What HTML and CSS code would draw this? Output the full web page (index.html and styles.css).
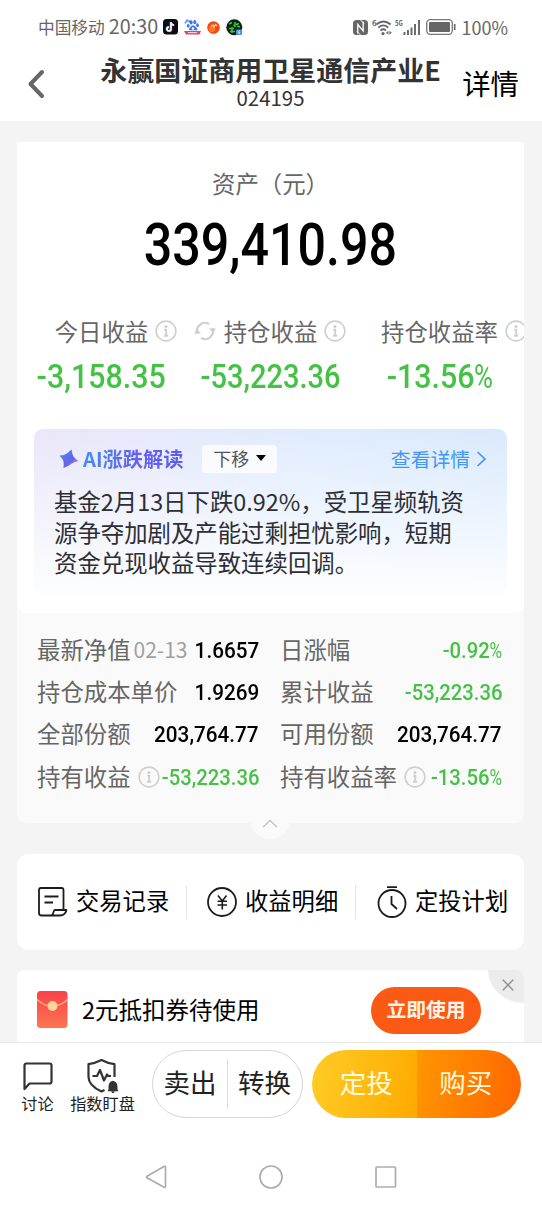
FILE: index.html
```html
<!DOCTYPE html>
<html lang="zh-CN">
<head>
    <meta charset="UTF-8">
    <meta name="viewport" content="width=device-width, initial-scale=1.0">
    <title>永赢国证商用卫星通信产业E</title>
    <link rel="stylesheet" href="styles.css">
</head>
<body>
    <!-- shared icons -->
    <svg class="defs">
        <symbol id="info" viewBox="0 0 22 22">
            <circle cx="11" cy="11" r="9.9" fill="none" stroke="#d0d0d0" stroke-width="1.6"/>
            <circle cx="11" cy="6.6" r="1.5" fill="#cfcfcf"/>
            <path d="M9.2 9.8H11.200V15.8M9 15.8H13.200" fill="none" stroke="#cfcfcf" stroke-width="1.900"/>
        </symbol>
    </svg>

    <div class="status-bar">
        <span class="carrier">中国移动</span>
        <span class="time">20:30</span>
        <div class="app-icons">
            <svg width="15" height="16" viewBox="0 0 15 16">
                <rect width="15" height="15.5" rx="3.5" fill="#0c0c14"/>
                <path d="M8 3.2V10a2 2 0 1 1-2-2M8 3.4c.3 1.7 1.4 2.6 3 2.7" fill="none" stroke="#2ee6e6" stroke-width="1.6" transform="translate(-.5 -.3)"/>
                <path d="M8 3.2V10a2 2 0 1 1-2-2M8 3.4c.3 1.7 1.4 2.6 3 2.7" fill="none" stroke="#f33a63" stroke-width="1.5" transform="translate(.5 .4)"/>
                <path d="M8 3.2V10a2 2 0 1 1-2-2M8 3.4c.3 1.7 1.4 2.6 3 2.7" fill="none" stroke="#fff" stroke-width="1.5"/>
            </svg>
            <svg width="17" height="17" viewBox="0 0 17 17">
                <path d="M1 4.5L3 1l2 2 1-2" fill="none" stroke="#6a9cf5" stroke-width="1.6"/>
                <ellipse cx="7.2" cy="3.4" rx="1.5" ry="2.1" fill="#3b74ef"/>
                <ellipse cx="10.8" cy="3.2" rx="1.5" ry="2.1" fill="#3b74ef"/>
                <ellipse cx="4.2" cy="6.8" rx="1.4" ry="1.9" fill="#3b74ef"/>
                <ellipse cx="13.5" cy="6.2" rx="1.4" ry="1.9" fill="#3b74ef"/>
                <path d="M9 6.2c2 0 4.6 3.6 4.6 5H4.8c0-1.4 2.4-5 4.2-5z" fill="#3b74ef"/>
                <circle cx="9" cy="9.5" r="1.2" fill="#fff"/>
                <path d="M0 12h17l-1.500 3.500H2z" fill="#e8415a"/>
                <path d="M4 13.600h9" stroke="#fbd5da" stroke-width="1.1"/>
            </svg>
            <svg width="13" height="13" viewBox="0 0 13 13">
                <circle cx="6.5" cy="6.5" r="6.3" fill="#f04a1c"/>
                <circle cx="5" cy="8" r="3.3" fill="#ff8a2b" opacity=".7"/>
                <path d="M4 5l2-1 1 2 1.5-2.500L10 5" fill="none" stroke="#ffe2a0" stroke-width="1.1"/>
            </svg>
            <svg width="17" height="17" viewBox="0 0 17 17">
                <circle cx="8.3" cy="8.3" r="8" fill="#0b2410"/>
                <path d="M3 5l3-1.500M7.500 6.500l5.500-2M9 3v5M3 9.500h5M4 12.500h5M6 8v6M11 7l3 1" fill="none" stroke="#35c83c" stroke-width="1.5"/>
                <rect x="10" y="10.5" width="6" height="5.5" rx="1" fill="#4b8fe8"/>
                <path d="M13.800 11.300l-1.500 2h1.500l-1 2" fill="none" stroke="#fff" stroke-width=".8"/>
            </svg>
        </div>
        <div class="system-icons">
            <svg width="15" height="15" viewBox="0 0 15 15">
                <rect width="15" height="15" rx="3.5" fill="#666"/>
                <path d="M4.800 13.500V4.500L10.200 11V1.500" fill="none" stroke="#fff" stroke-width="1.3"/>
                <path d="M7.500 0L11 3.500M4 11.500L7.500 15" fill="none" stroke="#fff" stroke-width="1"/>
            </svg>
            <svg class="wifi" width="20" height="17" viewBox="0 0 20 17">
                <text x="0" y="7" class="tiny">6</text>
                <path d="M4.300 5.500Q11.500-.5 18.700 5.500M6.300 8.600q5-4.400 10 0M8.500 11.500q2.800-2.400 5.400 0" fill="none" stroke="#666" stroke-width="1.800"/>
                <circle cx="11" cy="14.600" r="1.600" fill="#666"/>
                <path d="M16.400 11.700l-2.400 2 2.400 2zM17.400 11.700l2.400 2-2.400 2z" fill="#666"/>
            </svg>
            <svg class="signal" width="26" height="17" viewBox="0 0 26 17">
                <text x="0" y="7" class="tiny" textLength="8" lengthAdjust="spacingAndGlyphs">5G</text>
                <path d="M9.500 16v-3M13 16v-5M16.500 16V8.500M20 16V5M24 16V1" fill="none" stroke="#666" stroke-width="1.9"/>
            </svg>
            <svg class="battery" width="30" height="16" viewBox="0 0 30 16">
                <rect x=".7" y=".7" width="25.6" height="14.6" rx="3.5" fill="none" stroke="#777" stroke-width="1.3"/>
                <rect x="3" y="3" width="21" height="10" rx="1" fill="#666"/>
                <path d="M28.700 5v6" stroke="#666" stroke-width="1.6"/>
            </svg>
            <span class="percent">100%</span>
        </div>
    </div>

    <header>
        <svg class="back" width="18" height="30" viewBox="0 0 18 30">
            <path d="M15 3L3.500 15 15 27" fill="none" stroke="#666" stroke-width="4" stroke-linecap="round" stroke-linejoin="round"/>
        </svg>
        <div class="title">
            <h1>永赢国证商用卫星通信产业E</h1>
            <p>024195</p>
        </div>
        <a class="detail-link">详情</a>
    </header>

    <main>
        <section class="asset-card">
            <div class="asset-main">
                <p class="asset-label">资产（元）</p>
                <p class="asset-total"><span class="num">339,410.98</span></p>
                <div class="stats">
                    <div class="stat">
                        <p class="stat-label">今日收益<svg class="info"><use href="#info"/></svg></p>
                        <p class="stat-value"><span class="num">-3,158.35</span></p>
                    </div>
                    <div class="stat">
                        <p class="stat-label">
                            <svg class="refresh" viewBox="0 0 22 22">
                                <path d="M3.600 14A8 8 0 0 1 15 4M18.400 8A8 8 0 0 1 7 18" fill="none" stroke="#cfcfcf" stroke-width="2.2"/>
                                <path d="M0 13.500l3-4.500 4 4.500zM22 8.500l-3 4.500-4-4.500z" fill="#cfcfcf"/>
                            </svg>持仓收益<svg class="info"><use href="#info"/></svg>
                        </p>
                        <p class="stat-value long"><span class="num">-53,223.36</span></p>
                    </div>
                    <div class="stat">
                        <p class="stat-label">持仓收益率<svg class="info"><use href="#info"/></svg></p>
                        <p class="stat-value"><span class="num">-13.56<i>%</i></span></p>
                    </div>
                </div>

                <div class="ai-box">
                    <div class="ai-head">
                        <svg class="star" width="20" height="20" viewBox="0 0 20 20">
                            <defs>
                                <linearGradient id="starFill" x1="0" y1="0" x2="1" y2="1">
                                    <stop offset="0" stop-color="#3f8cf5"/>
                                    <stop offset=".6" stop-color="#6a63e6"/>
                                    <stop offset="1" stop-color="#c59af0"/>
                                </linearGradient>
                            </defs>
                            <path d="M12.500.500q.8 5 2 7T19.500 12q-4 .5-6.500 2.500T4.500 19q.5-4 0-6.500T.5 6.500q4 0 6.500-1.500T12.500.500z" fill="url(#starFill)"/>
                        </svg>
                        <h2>AI涨跌解读</h2>
                        <button class="move">下移<span class="caret"></span></button>
                        <a class="more">查看详情
                            <svg width="11" height="18" viewBox="0 0 11 18"><path d="M1.500 2L9 9l-7.500 7" fill="none" stroke="#4496f2" stroke-width="1.7"/></svg>
                        </a>
                    </div>
                    <p class="ai-text">基金2月13日下跌0.92%，受卫星频轨资<br>源争夺加剧及产能过剩担忧影响，短期<br>资金兑现收益导致连续回调。</p>
                </div>
            </div>

            <div class="details">
                <div class="row"><span>最新净值</span><small>02-13</small><b class="num">1.6657</b></div>
                <div class="row"><span>日涨幅</span><b class="num down">-0.92<i>%</i></b></div>
                <div class="row"><span>持仓成本单价</span><b class="num">1.9269</b></div>
                <div class="row"><span>累计收益</span><b class="num down">-53,223.36</b></div>
                <div class="row"><span>全部份额</span><b class="num">203,764.77</b></div>
                <div class="row"><span>可用份额</span><b class="num">203,764.77</b></div>
                <div class="row"><span>持有收益</span><svg class="info"><use href="#info"/></svg><b class="num down">-53,223.36</b></div>
                <div class="row"><span>持有收益率</span><svg class="info"><use href="#info"/></svg><b class="num down">-13.56<i>%</i></b></div>
            </div>
            <div class="collapse">
                <svg width="16" height="9" viewBox="0 0 16 9"><path d="M1 8l7-6.500L15 8" fill="none" stroke="#c4c4c4" stroke-width="1.4"/></svg>
            </div>
        </section>

        <section class="actions">
            <a>
                <svg width="31" height="30" viewBox="0 0 31 30">
                    <path d="M26.500 22.500V3q0-2-2-2H4Q2 1 2 3v23q0 2.500 2.500 2.500H23q5 0 6.500-5.500H18q-1.200.2-1.700 2.700T14 28.500" fill="none" stroke="#1c1c1c" stroke-width="1.8" stroke-linejoin="round"/>
                    <path d="M7.500 9.500H21.500M7.500 15.500H16" stroke="#1c1c1c" stroke-width="1.8"/>
                </svg>
                <span>交易记录</span>
            </a>
            <a>
                <svg width="30" height="30" viewBox="0 0 30 30">
                    <circle cx="15" cy="15" r="14" fill="none" stroke="#1c1c1c" stroke-width="1.8"/>
                    <path d="M11 8.500l4.300 5.500 4.200-5.500M15.300 14v8.500M10.500 14.300h9.500M10.500 18h9.500" fill="none" stroke="#1c1c1c" stroke-width="1.6"/>
                </svg>
                <span>收益明细</span>
            </a>
            <a>
                <svg width="30" height="34" viewBox="0 0 30 34">
                    <circle cx="15" cy="18.500" r="13.500" fill="none" stroke="#1c1c1c" stroke-width="1.8"/>
                    <path d="M10 2.200h10M14.500 11v8l5.500 5" fill="none" stroke="#1c1c1c" stroke-width="1.8"/>
                </svg>
                <span>定投计划</span>
            </a>
        </section>

        <section class="coupon">
            <svg width="31" height="38" viewBox="0 0 31 38">
                <defs>
                    <linearGradient id="packet" x1="0" y1="0" x2="0" y2="1">
                        <stop offset="0" stop-color="#f9424a"/>
                        <stop offset="1" stop-color="#ff7552"/>
                    </linearGradient>
                </defs>
                <rect width="30.5" height="37" rx="3.5" fill="url(#packet)"/>
                <path d="M0 8.500Q7 15 15.500 15T30.500 8.500" fill="none" stroke="#ffad83" stroke-width="1.5"/>
                <circle cx="15.5" cy="15" r="5" fill="#fbd598"/>
            </svg>
            <span>2元抵扣券待使用</span>
            <button>立即使用</button>
            <div class="close">
                <svg width="12" height="12" viewBox="0 0 12 12"><path d="M.8.8l10.400 10.400M11.200.8L.8 11.200" stroke="#909090" stroke-width="1.5"/></svg>
            </div>
        </section>
    </main>

    <footer>
        <div class="tool-bar">
            <a class="tool chat">
                <svg width="34" height="36" viewBox="0 0 34 36">
                    <path d="M5 5.500H28.500q2 0 2 2V23.500q0 2-2 2H8.500L3.500 31V7.500q0-2 2-2z" fill="none" stroke="#333" stroke-width="2.2" stroke-linejoin="round"/>
                </svg>
                讨论
            </a>
            <a class="tool watch">
                <svg width="34" height="36" viewBox="0 0 34 36">
                    <path d="M28.500 19V6.200Q22 5.500 15.500 2 8.500 5.500 2.500 6.200V19q0 8.500 13 14.500l3-1.500" fill="none" stroke="#333" stroke-width="2.2" stroke-linejoin="round"/>
                    <path d="M6.500 18H11l3-6 4 10.500 3-6 1.200 1.500H25" fill="none" stroke="#333" stroke-width="2.2" stroke-linejoin="round"/>
                    <path d="M26.800 22.800q4.700 1 4.700 6v2.700l1 1.700H21.500l1-1.700v-2.700q0-5 4.300-6zM25.300 33.500h3.400l-.7 1.500h-2z" fill="#333"/>
                </svg>
                指数盯盘
            </a>
            <div class="sell-group">
                <button>卖出</button>
                <button>转换</button>
            </div>
            <div class="buy-group">
                <button class="plan">定投</button>
                <button class="buy">购买</button>
            </div>
        </div>
        <div class="nav-bar">
            <svg width="24" height="26" viewBox="0 0 24 26"><path d="M20 2.500Q21.500 1.700 21.500 3V22.500Q21.500 24 20 23.200L3 13.800Q2 13 3 12.200z" fill="none" stroke="#adadad" stroke-width="1.7"/></svg>
            <svg width="24" height="26" viewBox="0 0 24 26"><circle cx="12" cy="13" r="11" fill="none" stroke="#adadad" stroke-width="1.7"/></svg>
            <svg width="24" height="26" viewBox="0 0 24 26"><rect x="2" y="3" width="19.5" height="20" rx=".8" fill="none" stroke="#adadad" stroke-width="1.7"/></svg>
        </div>
    </footer>
</body>
</html>
```
FILE: styles.css
```css
* {
    box-sizing: border-box;
}

body {
    font-family: "Noto Sans CJK SC", sans-serif;
    margin: 0;
    height: 1206px;
    display: flex;
    flex-direction: column;
    overflow: hidden;
    background-color: #fff;
    color: #333;
}

h1, h2, p {
    margin: 0;
}

svg {
    display: block;
    flex: none;
}

button {
    font-family: inherit;
    border: none;
    padding: 0;
    cursor: pointer;
}

.defs {
    width: 0;
    height: 0;
    position: absolute;
}

/* narrow figures */
.num {
    font-family: Roboto, "Noto Sans CJK SC", sans-serif;
    font-weight: 500;
    display: inline-block;
    transform: scaleX(0.92);
}

.num i {
    font-style: normal;
    font-weight: 400;
    display: inline-block;
    transform: scaleX(0.85);
    transform-origin: left;
    margin-right: -0.11em;
}

.down {
    color: #45c245;
}

.info {
    width: 22px;
    height: 22px;
}

/* status bar */
.status-bar {
    height: 54px;
    flex: none;
    display: flex;
    align-items: center;
    padding: 0 34px 0 38px;
    color: #666;
}

.carrier {
    font-size: 16.7px;
    line-height: 24px;
    margin-top: -1px;
}

.time {
    font-size: 19.8px;
    line-height: 24px;
    margin-top: -2px;
    margin-left: 4px;
    width: 54px;
    white-space: nowrap;
}

.app-icons {
    display: flex;
    align-items: center;
    gap: 6px;
}

.system-icons {
    display: flex;
    align-items: center;
    margin-left: auto;
}

.tiny {
    font: bold 8px "Noto Sans CJK SC", sans-serif;
    fill: #666;
}

.wifi,
.signal {
    overflow: visible;
}

.wifi {
    margin-left: 4px;
}

.signal {
    margin-left: 3px;
}

.battery {
    margin-left: 5px;
}

.percent {
    font-size: 18px;
    line-height: 24px;
    margin-top: -1px;
    margin-left: 5px;
}

/* header */
header {
    height: 67px;
    flex: none;
    display: flex;
    padding-left: 27px;
    padding-right: 23px;
}

.back {
    margin-top: 15px;
}

.title {
    display: flex;
    flex-direction: column;
    align-items: center;
    margin-left: 55px;
    width: 341px;
}

.title h1 {
    font-size: 27px;
    line-height: 32px;
    white-space: nowrap;
}

.title p {
    font-size: 20.4px;
    line-height: 22px;
}

.detail-link {
    font-size: 28.4px;
    line-height: 58px;
    margin-left: auto;
    color: #000;
}

/* content */
main {
    flex: 1;
    min-height: 0;
    overflow: hidden;
    background-color: #f4f4f4;
    padding: 21px 18px 0 17px;
}

.asset-card {
    background-color: #fafafa;
    border-radius: 3px 3px 9px 9px;
    height: 681px;
    position: relative;
}

.asset-main {
    background-color: #fff;
    border-radius: 3px 3px 9px 9px;
    height: 471px;
    overflow: hidden;
    padding-top: 25px;
}

.asset-label {
    font-size: 23.4px;
    line-height: 32px;
    text-align: center;
    color: #666;
}

.asset-total {
    font-size: 58.4px;
    line-height: 64px;
    margin-top: 9px;
    text-align: center;
    color: #000;
}

.asset-total .num {
    transform: scaleX(0.86);
}

.stats {
    display: flex;
    margin-top: 39px;
}

.stat {
    width: 169px;
    display: flex;
    flex-direction: column;
    align-items: center;
}

.stat-label {
    display: flex;
    align-items: center;
    font-size: 23.4px;
    line-height: 30px;
    color: #666;
    white-space: nowrap;
}

.stat-label .info {
    margin-left: 7px;
    margin-right: -29px;
}

.refresh {
    width: 22px;
    height: 22px;
    margin-left: -30px;
    margin-right: 8px;
}

.stat-value {
    font-size: 33px;
    line-height: 40px;
    margin-top: 8px;
    color: #45c245;
    white-space: nowrap;
}

.stat-value.long .num {
    transform: scaleX(0.88);
}

/* AI box */
.ai-box {
    margin: 32px 17px 0;
    height: 165px;
    border-radius: 9px;
    background: linear-gradient(to bottom, rgba(252, 253, 255, 0), #fcfdff 98%), linear-gradient(to right, #eae6f9, #dfecfe 60%, #d9e9fd);
}

.ai-head {
    display: flex;
    align-items: center;
    height: 60px;
    padding: 0 20px 0 25px;
}

.ai-head h2 {
    font-size: 20.2px;
    line-height: 28px;
    margin-left: 4px;
    background: linear-gradient(to right, #438cf5, #665ff0 55%, #5c5bf2);
    -webkit-background-clip: text;
    background-clip: text;
    color: transparent;
}

.move {
    display: flex;
    align-items: center;
    justify-content: center;
    width: 75px;
    height: 28px;
    margin-left: 19px;
    border-radius: 4px;
    background-color: rgba(255, 255, 255, 0.75);
    font-size: 18px;
    line-height: 26px;
    padding-bottom: 2px;
    color: #555;
}

.caret {
    margin-left: 7px;
    border: 5px solid transparent;
    border-top: 6px solid #000;
    border-bottom: none;
}

.more {
    display: flex;
    align-items: center;
    gap: 6px;
    margin-left: auto;
    font-size: 19.8px;
    line-height: 28px;
    color: #4496f2;
}

.ai-text {
    font-size: 23.4px;
    line-height: 30.7px;
    margin: -3px 0 0 20px;
    color: #2c2e33;
    white-space: nowrap;
}

/* details */
.details {
    display: grid;
    grid-template-columns: 222px 222px;
    column-gap: 21px;
    grid-auto-rows: 42.2px;
    padding: 16px 0 0 20px;
}

.row {
    display: flex;
    align-items: center;
    font-size: 23.4px;
    color: #666;
    white-space: nowrap;
}

.row span {
    margin-top: -2px;
}

.row small {
    font-size: 21px;
    color: #a0a0a0;
    margin-top: -2px;
    margin-left: 3px;
}

.row .info {
    margin-left: 7px;
    margin-right: -20px;
}

.row .num {
    margin-left: auto;
    font-size: 22.5px;
    color: #000;
    transform-origin: right;
}

.row .num.down {
    color: #45c245;
    transform: scaleX(0.9);
}

.collapse {
    position: absolute;
    left: 233px;
    bottom: -16px;
    width: 40px;
    height: 32px;
    border-radius: 0 0 20px 20px;
    background-color: #fafafa;
    display: flex;
    justify-content: center;
    padding-top: 12px;
}

/* actions */
.actions {
    display: flex;
    align-items: center;
    height: 96px;
    margin-top: 31px;
    border-radius: 12px;
    background-color: #fff;
    padding-left: 20px;
}

.actions a {
    display: flex;
    align-items: center;
    gap: 8px;
    width: 149px;
    height: 34px;
    font-size: 23.3px;
    color: #000;
    white-space: nowrap;
}

.actions a + a {
    width: 169px;
    padding-left: 20px;
    border-left: 1px solid #e6e6e6;
}

.actions a:last-child {
    padding-left: 21px;
}

.actions span {
    margin-top: -4px;
}

/* coupon */
.coupon {
    display: flex;
    align-items: center;
    height: 80px;
    margin-top: 20px;
    border-radius: 8px;
    background-color: #fff;
    padding: 0 43px 0 20px;
    position: relative;
    overflow: hidden;
    font-size: 23.5px;
    color: #000;
}

.coupon span {
    margin-top: -3px;
    margin-left: 14px;
}

.coupon button {
    width: 110px;
    height: 47px;
    margin-left: auto;
    border-radius: 24px;
    background-color: #fb5a14;
    color: #fff5e6;
    font-size: 19.8px;
    font-weight: bold;
    padding-bottom: 3px;
}

.close {
    position: absolute;
    top: 0;
    right: 0;
    width: 36px;
    height: 33px;
    border-bottom-left-radius: 36px 33px;
    background-color: #ececec;
    padding: 9px 0 0 14px;
}

/* bottom */
footer {
    flex: none;
    height: 164px;
    border-top: 1px solid #e8e8e8;
    background-color: #fff;
}

.tool-bar {
    display: flex;
    height: 100px;
    padding: 7px 21px 0 20px;
}

.tool {
    display: flex;
    flex-direction: column;
    align-items: center;
    font-size: 16.2px;
    line-height: 18px;
    padding-top: 8px;
    color: #222;
    white-space: nowrap;
}

.chat {
    width: 35px;
}

.watch {
    width: 65px;
    margin-left: 15px;
}

.sell-group,
.buy-group {
    display: flex;
    height: 68px;
    border-radius: 34px;
    overflow: hidden;
}

.sell-group {
    width: 151px;
    margin-left: 17px;
    border: 1px solid #d6d6d6;
    align-items: center;
}

.sell-group button {
    width: 74px;
    height: 50px;
    background: none;
    font-size: 26.5px;
    padding-bottom: 6px;
    color: #222;
}

.sell-group button + button {
    border-left: 1px solid #ddd;
}

.buy-group {
    margin-left: auto;
    width: 209px;
}

.buy-group button {
    width: 105px;
    height: 68px;
    font-size: 26.5px;
    padding-bottom: 6px;
    color: #fffbdc;
}

.buy-group .plan {
    background: linear-gradient(100deg, #ffcc26, #ffaa00);
    padding-left: 4px;
}

.buy-group .buy {
    background: linear-gradient(100deg, #ff9700, #ff6500);
    padding-right: 6px;
}

.nav-bar {
    display: flex;
    justify-content: center;
    gap: 91px;
    padding-top: 21px;
}
```
